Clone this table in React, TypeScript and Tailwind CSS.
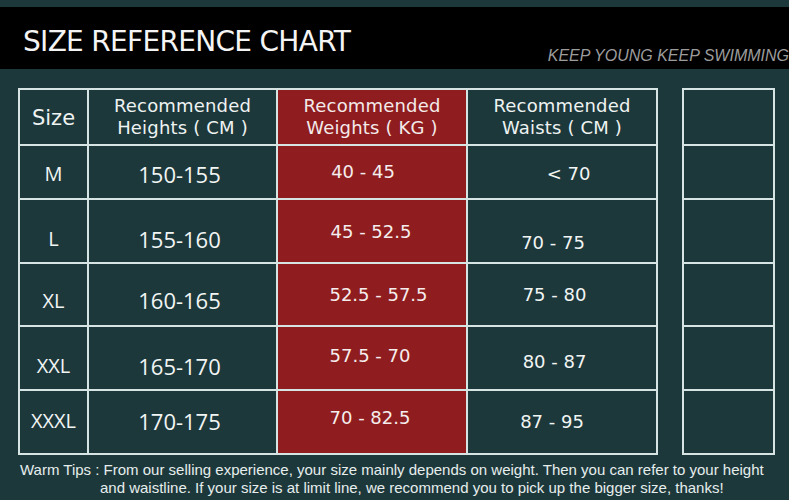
import React from 'react'

const rows = [
  { size: 'M', height: '150-155', weight: '40 - 45', waist: '< 70', h: 'h-[52px]', sy: 'pt-[4px]', wy: 'pb-[2px]', wx: 'pr-[18px]', ay: 'pt-[2px]', ax: 'pl-[13px]' },
  { size: 'L', height: '155-160', weight: '45 - 52.5', waist: '70 - 75', h: 'h-[62px]', sy: 'pt-[16px]', wy: 'pt-[0px]', wx: 'pr-[2px]', ay: 'pt-[22px]', ax: 'pr-[18px]' },
  { size: 'XL', height: '160-165', weight: '52.5 - 57.5', waist: '75 - 80', h: 'h-[61px]', sy: 'pt-[12px]', wy: 'pt-[0px]', wx: 'pl-[13px]', ay: 'pt-[0px]', ax: 'pr-[15px]' },
  { size: 'XXL', height: '165-170', weight: '57.5 - 70', waist: '80 - 87', h: 'h-[62px]', sy: 'pt-[16px]', wy: 'pb-[6px]', wx: 'pr-[4px]', ay: 'pt-[6px]', ax: 'pr-[15px]' },
  { size: 'XXXL', height: '170-175', weight: '70 - 82.5', waist: '87 - 95', h: 'h-[62px]', sy: 'pb-[2px]', wy: 'pb-[10px]', wx: 'pr-[4px]', ay: 'pb-[2px]', ax: 'pr-[20px]' },
]

function HeadCell({ top, bottom, red }: { top: string; bottom: string; red?: boolean }) {
  return (
    <div
      className={`${red ? 'bg-[#8f1d1f] text-[#f3eaea]' : 'bg-[#1d383b] text-[#eef3f2]'} flex flex-col items-center justify-center text-[18px] leading-[22px] tracking-[0.01em] font-['DejaVu_Sans',sans-serif]`}
    >
      <span>{top}</span>
      <span>{bottom}</span>
    </div>
  )
}

export default function App() {
  return (
    <div className="w-[789px] h-[500px] overflow-hidden bg-[#1d383b] pt-[7px]">
      <div className="h-[62px] bg-black flex items-end justify-between">
        <h1 className="pl-[23px] pb-[13px] text-[28px] leading-none tracking-[-0.025em] text-[#f4f4f4] font-['DejaVu_Sans',sans-serif]">
          SIZE REFERENCE CHART
        </h1>
        <p className="pb-[5px] text-[16px] leading-none italic text-[#9c9c9c] whitespace-nowrap font-['Liberation_Sans',sans-serif]">
          KEEP YOUNG KEEP SWIMMING
        </p>
      </div>

      <div className="flex items-start gap-[24px] pl-[18px] mt-[19px]">
        <div className="grid grid-cols-[67px_187px_188px_188px] grid-rows-[54px_auto] gap-[2px] p-[2px] bg-[#d6e5e4]">
          <div className="bg-[#1d383b] flex items-center justify-center text-[21px] text-[#eef3f2] pt-[4px] font-['DejaVu_Sans',sans-serif]">
            Size
          </div>
          <HeadCell top="Recommended" bottom="Heights ( CM )" />
          <HeadCell top="Recommended" bottom="Weights ( KG )" red />
          <HeadCell top="Recommended" bottom="Waists ( CM )" />
          {rows.map((r) => (
            <React.Fragment key={r.size}>
              <div className={`bg-[#1d383b] flex items-center justify-center text-[20px] text-[#f1f5f4] font-['Open_Sans',sans-serif] ${r.h} ${r.sy}`}>
                {r.size}
              </div>
              <div className={`bg-[#1d383b] flex items-center justify-center text-[22px] text-[#f1f5f4] pr-[6px] font-['Open_Sans',sans-serif] ${r.sy}`}>
                {r.height}
              </div>
              <div className={`bg-[#8f1d1f] flex items-center justify-center text-[18px] text-[#f5eded] font-['DejaVu_Sans',sans-serif] ${r.wy} ${r.wx}`}>
                {r.weight}
              </div>
              <div className={`bg-[#1d383b] flex items-center justify-center text-[18px] text-[#f1f5f4] font-['DejaVu_Sans',sans-serif] ${r.ay} ${r.ax}`}>
                {r.waist}
              </div>
            </React.Fragment>
          ))}
        </div>

        <div className="grid grid-cols-[89px] gap-[2px] p-[2px] bg-[#d6e5e4]">
          <div className="bg-[#1d383b] h-[54px]" />
          {rows.map((r) => (
            <div key={r.size} className={`bg-[#1d383b] ${r.h}`} />
          ))}
        </div>
      </div>

      <div className="mt-[6px] text-[15px] leading-[18px] text-[#e6eeed] whitespace-nowrap font-['Liberation_Sans',sans-serif]">
        <div className="pl-[20px]">Warm Tips : From our selling experience, your size mainly depends on weight. Then you can refer to your height</div>
        <div className="pl-[100px]">and waistline. If your size is at limit line, we recommend you to pick up the bigger size, thanks!</div>
      </div>
    </div>
  )
}
